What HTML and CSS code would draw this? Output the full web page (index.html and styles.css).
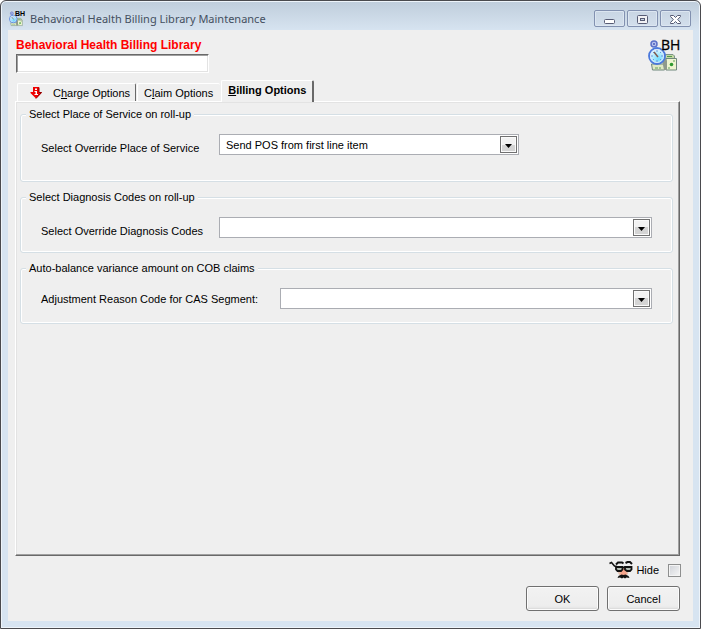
FILE: index.html
```html
<!DOCTYPE html>
<html lang="en">
<head>
<meta charset="utf-8">
<title>Behavioral Health Billing Library Maintenance</title>
<link rel="stylesheet" href="styles.css">
</head>
<body>
<svg class="defs" aria-hidden="true">
  <defs>
    <radialGradient id="dial" cx="0.6" cy="0.7" r="0.7">
      <stop offset="0" stop-color="#6fdcff"/>
      <stop offset="1" stop-color="#eefaff"/>
    </radialGradient>
    <symbol id="watch" viewBox="0 0 34 32">
      <path d="M17 14.500h8l1.500 1.500v6H17z" fill="#c3d6a6" stroke="#7d9487"/>
      <path d="M3.500 24h13v6h-12z" fill="#dfe8c4" stroke="#6f887c"/>
      <path d="M18 18.500h10.500v11.500H18z" fill="#eef4d0" stroke="#6f887c"/>
      <path d="M14 20l4-1 1 2v9h-3z" fill="#8f9a8c"/>
      <path d="M19 16.500h5" stroke="#4f9b48"/>
      <circle cx="23.500" cy="24.500" r="1.800" fill="#2f9a2f"/>
      <path d="M7 28h3M11 28h2M26 20v2M20 28h2" stroke="#60a05a"/>
      <circle cx="6" cy="4" r="3" fill="#b9c3ee" stroke="#5c70c8" stroke-width="1.500"/>
      <circle cx="6" cy="4" r="1" fill="#4a5cb8"/>
      <path d="M5 7h3v3H5z" fill="#8aa2e0"/>
      <circle cx="9" cy="16" r="8" fill="url(#dial)" stroke="#4a78dc" stroke-width="1.800"/>
      <circle cx="9" cy="16" r="6.500" fill="none" stroke="#d6e5fb"/>
      <path d="M9 10v2M9 20v2M3 16h2M13 16h2M5 12l1 1M13 12l-1 1M5 20l1-1M13 20l-1-1" stroke="#6c97dc"/>
      <path d="M6 12l4 5" stroke="#805a50" stroke-width="1.500"/>
    </symbol>
  </defs>
</svg>
<div class="window">
  <header class="titlebar">
    <span class="app-icon"><svg width="17" height="16" aria-hidden="true"><use href="#watch"/></svg><span class="app-icon-text">BH</span></span>
    <h1 class="title">Behavioral Health Billing Library Maintenance</h1>
    <div class="controls">
      <button class="control" type="button" aria-label="Minimize">
        <svg width="13" height="12" viewBox="0 0 13 12"><rect x="1.500" y="6.500" width="10" height="4" rx="1" fill="#fff" stroke="#565b74"/></svg>
      </button>
      <button class="control" type="button" aria-label="Maximize">
        <svg width="13" height="12" viewBox="0 0 13 12"><rect x="1.500" y="2.500" width="10" height="8" rx="1" fill="#f1f1f4" stroke="#565b74"/><rect x="4.500" y="5.500" width="4" height="2" fill="#c9d4e3" stroke="#565b74"/></svg>
      </button>
      <button class="control" type="button" aria-label="Close">
        <svg width="13" height="12" viewBox="0 0 13 12"><path d="M1.500 2.500H4.500L6.500 4.500L8.500 2.500H11.500V3.500L8.700 6.500L11.500 9.500V10.500H8.500L6.500 8.500L4.500 10.500H1.500V9.500L4.300 6.500L1.500 3.500Z" fill="#fff" stroke="#565b74"/></svg>
      </button>
    </div>
  </header>
  <main class="client">
    <div class="heading">
      <div class="library">
        <label class="library-label" for="library">Behavioral Health Billing Library</label>
        <input class="library-input" id="library" type="text">
      </div>
      <div class="brand"><svg width="34" height="32" aria-hidden="true"><use href="#watch"/></svg><span class="brand-text">BH</span></div>
    </div>
    <div class="tabs" role="tablist">
      <button class="tab tab-first" type="button" role="tab" aria-selected="false">
        <svg width="12" height="12" viewBox="0 0 12 12" aria-hidden="true"><path d="M3 0h6v5h2.500v1L6 11.500.500 6V5H3z" fill="#f00000"/><path d="M9 0.500V5.500h2.500L6 11.500" fill="none" stroke="#900000"/><path d="M5 1.500h2V3H5zM4.500 4H7v3h1v1H4.500V7h1V5h-1z" fill="#fff"/></svg>
        <span>C<u>h</u>arge Options</span>
      </button>
      <button class="tab" type="button" role="tab" aria-selected="false"><span>C<u>l</u>aim Options</span></button>
      <button class="tab tab-active" type="button" role="tab" aria-selected="true"><span><u>B</u>illing Options</span></button>
    </div>
    <section class="panel" role="tabpanel" aria-label="Billing Options">
      <fieldset class="group group-tall">
        <legend>Select Place of Service on roll-up</legend>
        <div class="row">
          <label class="row-label row-label-low" for="pos">Select Override Place of Service</label>
          <div class="combo combo-short">
            <select id="pos"><option>Send POS from first line item</option></select>
            <span class="arrow" aria-hidden="true"><svg width="7" height="4" viewBox="0 0 7 4"><path d="M0 0h7L3.500 4z"/></svg></span>
          </div>
        </div>
      </fieldset>
      <fieldset class="group">
        <legend>Select Diagnosis Codes on roll-up</legend>
        <div class="row">
          <label class="row-label row-label-low" for="dx">Select Override Diagnosis Codes</label>
          <div class="combo">
            <select id="dx"><option></option></select>
            <span class="arrow" aria-hidden="true"><svg width="7" height="4" viewBox="0 0 7 4"><path d="M0 0h7L3.500 4z"/></svg></span>
          </div>
        </div>
      </fieldset>
      <fieldset class="group">
        <legend>Auto-balance variance amount on COB claims</legend>
        <div class="row">
          <label class="row-label row-label-wide" for="cas">Adjustment Reason Code for CAS Segment:</label>
          <div class="combo">
            <select id="cas"><option></option></select>
            <span class="arrow" aria-hidden="true"><svg width="7" height="4" viewBox="0 0 7 4"><path d="M0 0h7L3.500 4z"/></svg></span>
          </div>
        </div>
      </fieldset>
    </section>
    <div class="hide-row">
      <svg width="24" height="18" viewBox="0 0 24 18" aria-hidden="true">
        <path d="M8 8h12l-1 5-3 2h-5l-2-3z" fill="#e3c0b0"/>
        <path d="M13 7h3l2 6-1.500 1.500h-4L11 13z" fill="#f6a58c"/>
        <path d="M0.500 2.500l2-1 3 3.500 2.500 0.500" fill="none" stroke="#111" stroke-width="1.500"/>
        <path d="M7 3.500l2-2h4l1.500 1M16.500 2l2-1h2.500l2 2" fill="none" stroke="#111" stroke-width="2"/>
        <path d="M7 6h6.500v2.500l-1.500 1.500H8.500L7 8.500zM16 6h6.500v2.500L21 10h-3l-2-1.500z" fill="#b4bdb4" stroke="#111" stroke-width="1.800"/>
        <path d="M13 6.500h3" stroke="#111" stroke-width="1.500"/>
        <path d="M8.500 17l1-2 3-1.500 2 .5 2-.5 3 1.500 1 2-3-.5-1.500 1-1.500-1-1.500 1-2-1z" fill="#111"/>
      </svg>
      <label for="hide">Hide</label>
      <input id="hide" class="check" type="checkbox">
    </div>
    <div class="actions">
      <button class="action" type="button">OK</button>
      <button class="action" type="button">Cancel</button>
    </div>
  </main>
</div>
</body>
</html>
```
FILE: styles.css
```css
* {
  box-sizing: border-box;
}

body {
  margin: 0;
  background: #fff;
  color: #000;
  font: 11px/14px "Liberation Sans", Arial, sans-serif;
}

button,
input,
select {
  font: inherit;
  color: inherit;
}

.defs {
  position: absolute;
  width: 0;
  height: 0;
}

.window {
  display: flex;
  flex-direction: column;
  min-height: 100vh;
  padding: 0 7px 7px;
  border: 1px solid #4a4a4e;
  border-radius: 6px 6px 0 0;
  background: linear-gradient(#bfcddb, #d7e4f1 30px);
  box-shadow: inset 0 0 0 1px #eef4fa;
}

.titlebar {
  display: flex;
  align-items: center;
  height: 29px;
  padding: 6px 2px 0 1px;
}

.app-icon {
  position: relative;
  display: flex;
  height: 16px;
  width: 16px;
  margin-right: 5px;
}

.app-icon-text {
  position: absolute;
  top: -2px;
  left: 6px;
  font: bold 7px/10px "Liberation Sans", Arial, sans-serif;
}

.title {
  flex: 1;
  margin: 0;
  color: #444f60;
  font: 11px/16px "Noto Sans", "Open Sans", sans-serif;
}

.controls {
  display: flex;
  gap: 2px;
}

.control {
  display: flex;
  align-items: center;
  justify-content: center;
  width: 31px;
  height: 17px;
  padding: 0;
  border: 1px solid #8291b0;
  border-radius: 2px;
  background: linear-gradient(#c8d5e3, #d3dfec);
  box-shadow: inset 0 0 0 1px #dce6f1;
}

.client {
  display: flex;
  flex: 1;
  flex-direction: column;
  padding: 8px 13px 10px 7px;
  background: #efefef;
}

.heading {
  display: flex;
  justify-content: space-between;
  height: 42px;
}

.library {
  display: flex;
  flex-direction: column;
  gap: 2px;
  margin-left: 1px;
}

.library-label {
  color: #f00;
  font-size: 12px;
  font-weight: bold;
}

.library-input {
  width: 193px;
  height: 19px;
  padding: 0 4px;
  border: 1px solid;
  border-color: #696969 #fff #fff #696969;
  background: #fff;
  box-shadow: inset 1px 1px #a0a0a0, inset -1px -1px #e3e3e3;
}

.brand {
  position: relative;
  margin: 2px -2px 0 0;
}

.brand-text {
  position: absolute;
  top: -3px;
  left: 13px;
  font: 14px/16px "Open Sans", sans-serif;
  -webkit-text-stroke: 0.3px;
}

.tabs {
  display: flex;
  align-items: flex-end;
  gap: 1px;
  height: 21px;
  margin-left: 2px;
}

.tab {
  display: flex;
  align-items: center;
  justify-content: center;
  height: 18px;
  padding: 0 7px 0 6px;
  border: 1px solid #fff;
  border-width: 1px 0 0 1px;
  border-radius: 2px 2px 0 0;
  background: #efefef;
}

.tab-first {
  gap: 11px;
  padding: 0 5px 0 12px;
  border-right: 1px solid #696969;
}

.tab-active {
  z-index: 1;
  height: 22px;
  margin: 0 0 -1px;
  padding: 0 6px 3px;
  border-right: 2px solid #696969;
  font-weight: bold;
}

.panel {
  display: flex;
  flex: 1;
  flex-direction: column;
  gap: 8px;
  padding: 5px 6px 8px 4px;
  border: 1px solid;
  border-color: #fff #696969 #696969 #fff;
  box-shadow: inset -1px -1px #a0a0a0, inset 1px 1px #e3e3e3;
}

.group {
  min-width: 0;
  min-height: 63px;
  margin: 0;
  padding: 13px 20px 0;
  border: 1px solid #d5dfe5;
  border-radius: 3px;
  box-shadow: inset 0 0 0 1px #fff;
}

.group-tall {
  min-height: 75px;
}

.group legend {
  margin-left: -15px;
  padding: 0 3px;
  background: #efefef;
}

.row {
  display: flex;
  align-items: center;
}

.row-label {
  width: 178px;
}

.row-label-low {
  padding-top: 6px;
}

.row-label-wide {
  width: 239px;
}

.combo {
  position: relative;
  flex: 1;
}

.combo-short {
  flex: 0 1 300px;
}

.combo select {
  display: block;
  width: 100%;
  height: 21px;
  padding: 0 24px 0 6px;
  border: 1px solid #abadb3;
  border-radius: 0;
  background: #fff;
  appearance: none;
}

.arrow {
  position: absolute;
  top: 2px;
  right: 2px;
  display: flex;
  align-items: center;
  justify-content: center;
  width: 17px;
  height: 17px;
  padding-top: 3px;
  border: 1px solid #707070;
  background: linear-gradient(#f2f2f2 50%, #d4d4d4 50%);
  box-shadow: inset 0 0 0 1px #fafafa;
  pointer-events: none;
}

.hide-row {
  display: flex;
  align-items: center;
  justify-content: flex-end;
  gap: 3px;
  height: 18px;
  margin: 5px -1px 7px 0;
}

.check {
  width: 13px;
  height: 13px;
  margin: 0 0 0 6px;
  border: 1px solid #8e8f8f;
  background: linear-gradient(135deg, #cfd2d8, #f6f6f6);
  box-shadow: inset 0 0 0 1px #f4f4f4;
  appearance: none;
}

.check:checked {
  background: #4b5f97;
}

.actions {
  display: flex;
  justify-content: flex-end;
  gap: 8px;
}

.action {
  width: 73px;
  height: 25px;
  padding: 0;
  border: 1px solid #707070;
  border-radius: 3px;
  background: linear-gradient(#f2f2f2, #ececec);
  box-shadow: inset 0 0 0 1px #fcfcfc, inset 0 -2px 2px #d8d8d8;
}
```
